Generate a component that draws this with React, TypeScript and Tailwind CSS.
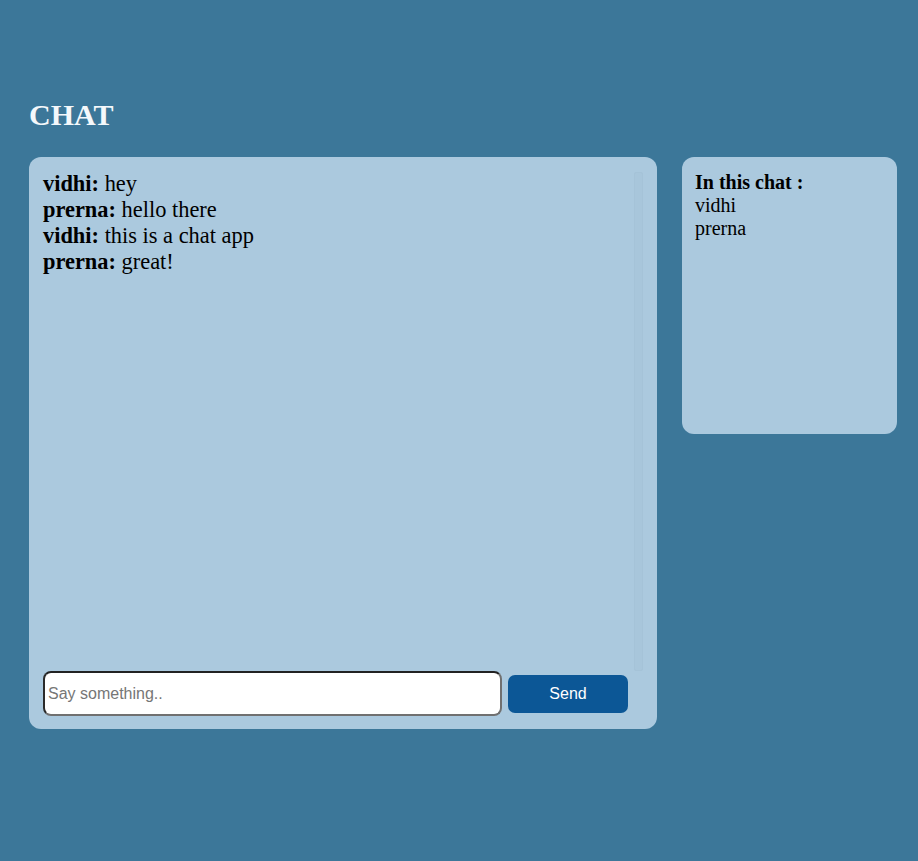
const messages = [
  { user: 'vidhi', text: 'hey' },
  { user: 'prerna', text: 'hello there' },
  { user: 'vidhi', text: 'this is a chat app' },
  { user: 'prerna', text: 'great!' },
];

const members = ['vidhi', 'prerna'];

export default function App() {
  return (
    <div className="min-h-screen bg-[#3c7799] px-[29px] pt-[97px] font-['Liberation_Serif',serif] text-black">
      <h1 className="text-[30px] font-bold leading-[36px] text-[#f4f8fb]">CHAT</h1>

      <div className="mt-[24px] flex items-start gap-[25px]">
        {/* chat box */}
        <div className="flex h-[572px] w-[628px] shrink-0 flex-col rounded-[12px] bg-[#abc9de] pl-[14px] pr-[14px] pt-[14px] pb-[13px]">
          <div className="flex min-h-0 flex-1">
            <div className="flex-1 text-[22.4px] leading-[26px]">
              {messages.map((m, i) => (
                <div key={i}>
                  <b>{m.user}:</b> {m.text}
                </div>
              ))}
            </div>
            <div className="mt-[1px] w-[9px] rounded-[2px] border border-[#a5c3d8] bg-[#a8c6db]" />
          </div>

          <div className="flex items-center gap-[6px]">
            <input
              type="text"
              placeholder="Say something.."
              className="h-[45px] w-[459px] rounded-[8px] border-2 border-t-[#222] border-l-[#2a2a2a] border-b-[#707070] border-r-[#707070] bg-white px-[3px] font-['Liberation_Sans',Arial,sans-serif] text-[16px] text-black placeholder:text-[#767676] outline-none"
            />
            <button className="h-[38px] w-[120px] rounded-[7px] bg-[#0c5796] font-['Liberation_Sans',Arial,sans-serif] text-[16px] text-white">
              Send
            </button>
          </div>
        </div>

        {/* members */}
        <div className="h-[277px] w-[215px] shrink-0 rounded-[12px] bg-[#abc9de] px-[13px] pt-[14px] text-[20px] leading-[23px]">
          <div className="font-bold">In this chat :</div>
          {members.map((m) => (
            <div key={m}>{m}</div>
          ))}
        </div>
      </div>
    </div>
  );
}
